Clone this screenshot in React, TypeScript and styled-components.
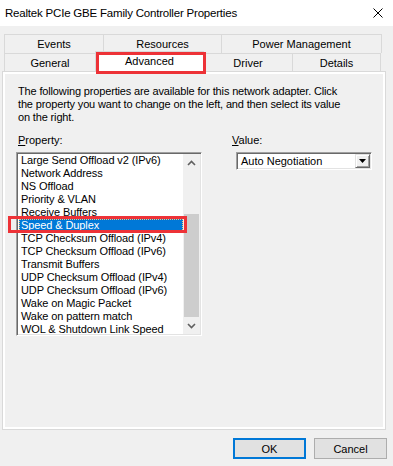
import React from "react";
import styled, { createGlobalStyle, css } from "styled-components";

const GlobalStyle = createGlobalStyle`
  html, body {
    margin: 0;
    padding: 0;
    background: #f0f0f0;
  }
  body {
    font-family: "Liberation Sans", Arial, sans-serif;
    font-size: 11px;
    color: #000;
  }
  * {
    box-sizing: border-box;
  }
`;

const Window = styled.div`
  width: 393px;
  height: 466px;
  background: #f0f0f0;
  display: flex;
  flex-direction: column;
  overflow: hidden;
`;

const TitleBar = styled.div`
  height: 26px;
  background: #fff;
  display: flex;
  align-items: center;
  justify-content: space-between;
  padding-left: 5px;
`;

const Title = styled.div`
  font-size: 11.5px;
  letter-spacing: -0.2px;
`;

const CloseButton = styled.div`
  width: 30px;
  height: 26px;
  display: flex;
  align-items: center;
  justify-content: center;
`;

const TabStrip = styled.div`
  margin: 8px 9px 0 4px;
  display: flex;
  flex-direction: column;
`;

const TabRow = styled.div<{ $height: number }>`
  display: flex;
  height: ${(p) => p.$height}px;
`;

const Tab = styled.div<{ $width: number; $selected?: boolean }>`
  position: relative;
  width: ${(p) => p.$width}px;
  height: 100%;
  border: 1px solid #d9d9d9;
  border-bottom: none;
  margin-left: -1px;
  background: #f0f0f0;
  display: flex;
  align-items: center;
  justify-content: center;
  &:first-child {
    margin-left: 0;
  }
  ${(p) =>
    p.$selected &&
    css`
      background: #fff;
      margin-top: -2px;
      height: calc(100% + 3px);
      z-index: 2;
      padding-bottom: 3px;
    `}
`;

const Highlight = styled.div<{ $inset: string }>`
  position: absolute;
  inset: ${(p) => p.$inset};
  border: 3px solid #ed3237;
  pointer-events: none;
  z-index: 5;
`;

const Panel = styled.div`
  margin: 0 7px 0 2px;
  height: 359px;
  border: 1px solid #d9d9d9;
  box-shadow: inset 0 0 0 2px #fff;
  padding: 13px 14px 0 13px;
  display: flex;
  flex-direction: column;
  position: relative;
  z-index: 1;
`;

const Description = styled.p`
  margin: 0 0 10px 2px;
  line-height: 13px;
  letter-spacing: -0.15px;
`;

const Columns = styled.div`
  display: grid;
  grid-template-columns: 186px 140px;
  column-gap: 30px;
`;

const Column = styled.div`
  display: flex;
  flex-direction: column;
`;

const FieldLabel = styled.div<{ $indent: number }>`
  line-height: 13px;
  margin: 0 0 5px ${(p) => p.$indent}px;
  u {
    text-decoration: underline;
  }
`;

const sunken = css`
  border: 1px solid;
  border-color: #a0a0a0 #fff #fff #a0a0a0;
  box-shadow: inset 1px 1px 0 #696969, inset -1px -1px 0 #e3e3e3;
`;

const ListBox = styled.div`
  ${sunken};
  width: 186px;
  height: 184px;
  background: #fff;
  display: flex;
  padding: 1px;
`;

const Items = styled.div`
  flex: 1;
  display: flex;
  flex-direction: column;
`;

const Item = styled.div<{ $selected?: boolean }>`
  position: relative;
  height: 13px;
  line-height: 13px;
  padding-left: 3px;
  white-space: nowrap;
  letter-spacing: -0.1px;
  ${(p) =>
    p.$selected &&
    css`
      background: #0078d7;
      color: #fff;
      margin-left: 1px;
      padding-left: 2px;
      outline: 1px dotted #f7c27a;
      outline-offset: -1px;
    `}
`;

const ScrollBar = styled.div`
  width: 17px;
  background: #f0f0f0;
  display: flex;
  flex-direction: column;
`;

const ScrollButton = styled.div`
  height: 17px;
  display: flex;
  align-items: center;
  justify-content: center;
`;

const Track = styled.div`
  flex: 1;
  display: flex;
  flex-direction: column;
  padding-top: 43px;
`;

const Thumb = styled.div`
  flex: 1;
  margin: 0 1px;
  background: #cdcdcd;
`;

const Combo = styled.div`
  ${sunken};
  margin-left: 4px;
  width: 136px;
  height: 18px;
  background: #fff;
  display: flex;
  align-items: stretch;
  padding: 1px;
`;

const ComboText = styled.div`
  flex: 1;
  padding-left: 3px;
  display: flex;
  align-items: center;
`;

const DropButton = styled.div`
  width: 15px;
  background: #f0f0f0;
  border: 1px solid;
  border-color: #e3e3e3 #696969 #696969 #e3e3e3;
  box-shadow: inset 1px 1px 0 #fff, inset -1px -1px 0 #a0a0a0;
  display: flex;
  align-items: center;
  justify-content: center;
`;

const Footer = styled.div`
  display: flex;
  justify-content: flex-end;
  gap: 8px;
  padding: 8px 6px 0 0;
`;

const Button = styled.div<{ $default?: boolean }>`
  width: 73px;
  height: 21px;
  background: #e1e1e1;
  border: 1px solid #adadad;
  display: flex;
  align-items: center;
  justify-content: center;
  ${(p) =>
    p.$default &&
    css`
      border: 2px solid #0078d7;
    `}
`;

const topTabs = [
  { label: "Events", width: 100 },
  { label: "Resources", width: 119 },
  { label: "Power Management", width: 161 },
];

const bottomTabs = [
  { label: "General", width: 92 },
  { label: "Advanced", width: 109, selected: true },
  { label: "Driver", width: 90 },
  { label: "Details", width: 89 },
];

const properties = [
  "Large Send Offload v2 (IPv6)",
  "Network Address",
  "NS Offload",
  "Priority & VLAN",
  "Receive Buffers",
  "Speed & Duplex",
  "TCP Checksum Offload (IPv4)",
  "TCP Checksum Offload (IPv6)",
  "Transmit Buffers",
  "UDP Checksum Offload (IPv4)",
  "UDP Checksum Offload (IPv6)",
  "Wake on Magic Packet",
  "Wake on pattern match",
  "WOL & Shutdown Link Speed",
];

const Chevron: React.FC<{ up?: boolean }> = ({ up }) => (
  <svg width="9" height="6" viewBox="0 0 9 6">
    <path
      d={up ? "M1 5 L4.5 1.5 L8 5" : "M1 1 L4.5 4.5 L8 1"}
      fill="none"
      stroke="#606060"
      strokeWidth="1.6"
    />
  </svg>
);

const App: React.FC = () => {
  return (
    <Window>
      <GlobalStyle />
      <TitleBar>
        <Title>Realtek PCIe GBE Family Controller Properties</Title>
        <CloseButton>
          <svg width="10" height="10" viewBox="0 0 10 10">
            <path d="M0.5 0.5 L9.5 9.5 M9.5 0.5 L0.5 9.5" stroke="#000" strokeWidth="1" />
          </svg>
        </CloseButton>
      </TitleBar>

      <TabStrip>
        <TabRow $height={19}>
          {topTabs.map((t) => (
            <Tab key={t.label} $width={t.width}>
              {t.label}
            </Tab>
          ))}
        </TabRow>
        <TabRow $height={18}>
          {bottomTabs.map((t) => (
            <Tab key={t.label} $width={t.width} $selected={t.selected}>
              {t.label}
              {t.selected && <Highlight $inset="0 -3px -2px 0" />}
            </Tab>
          ))}
        </TabRow>
      </TabStrip>

      <Panel>
        <Description>
          The following properties are available for this network adapter. Click
          <br />
          the property you want to change on the left, and then select its value
          <br />
          on the right.
        </Description>
        <Columns>
          <Column>
            <FieldLabel $indent={2}>
              <u>P</u>roperty:
            </FieldLabel>
            <ListBox>
              <Items>
                {properties.map((p) => (
                  <Item key={p} $selected={p === "Speed & Duplex"}>
                    {p}
                    {p === "Speed & Duplex" && <Highlight $inset="-3px -4px -1px -11px" />}
                  </Item>
                ))}
              </Items>
              <ScrollBar>
                <ScrollButton>
                  <Chevron up />
                </ScrollButton>
                <Track>
                  <Thumb />
                </Track>
                <ScrollButton>
                  <Chevron />
                </ScrollButton>
              </ScrollBar>
            </ListBox>
          </Column>
          <Column>
            <FieldLabel $indent={0}>
              <u>V</u>alue:
            </FieldLabel>
            <Combo>
              <ComboText>Auto Negotiation</ComboText>
              <DropButton>
                <svg width="7" height="4" viewBox="0 0 7 4">
                  <path d="M0 0 H7 L3.5 4 Z" fill="#000" />
                </svg>
              </DropButton>
            </Combo>
          </Column>
        </Columns>
      </Panel>

      <Footer>
        <Button $default>OK</Button>
        <Button>Cancel</Button>
      </Footer>
    </Window>
  );
};

export default App;
